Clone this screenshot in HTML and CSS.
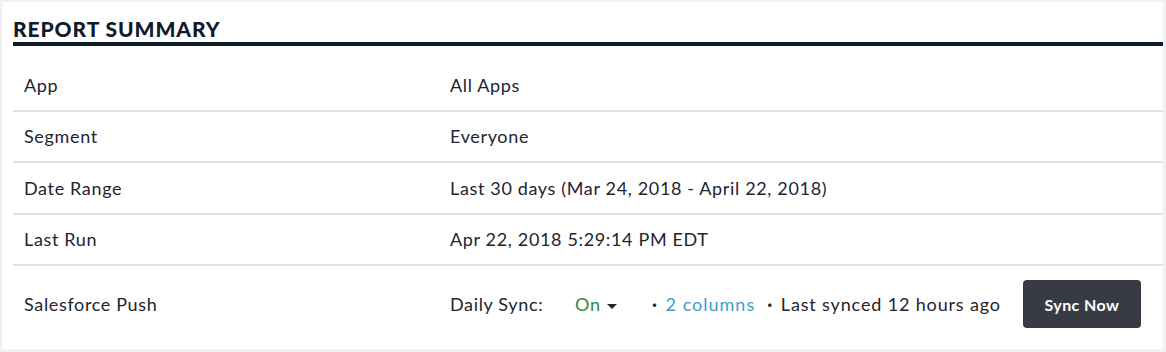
FILE: index.html
```html
<!DOCTYPE html>
<html lang="en">
<head>
  <meta charset="UTF-8" />
  <title>Report Summary</title>
  <link rel="stylesheet" href="styles.css">
</head>
<body>
  <div class="card">
    <h2 class="title">REPORT SUMMARY</h2>

    <div class="rows">
      <div class="row">
        <div class="label">App</div>
        <div class="value">All Apps</div>
      </div>
      <div class="row">
        <div class="label">Segment</div>
        <div class="value">Everyone</div>
      </div>
      <div class="row">
        <div class="label">Date Range</div>
        <div class="value">Last 30 days (Mar 24, 2018 - April 22, 2018)</div>
      </div>
      <div class="row">
        <div class="label">Last Run</div>
        <div class="value">Apr 22, 2018 5:29:14 PM EDT</div>
      </div>
      <div class="row row-last">
        <div class="label">Salesforce Push</div>
        <div class="value sync">
          <span class="sync-label">Daily Sync:</span>
          <span class="sync-state">On <span class="caret"></span></span>
          <span class="dot">&middot;</span>
          <a href="#" class="cols">2 columns</a>
          <span class="dot">&middot;</span>
          <span class="synced">Last synced 12 hours ago</span>
          <button class="btn">Sync Now</button>
        </div>
      </div>
    </div>
  </div>
</body>
</html>
```

FILE: styles.css
```css
body {
  margin: 0;
  background: #f1f1f3;
  font-family: 'Lato', sans-serif;
  color: #1f2430;
}

.card {
  background: white;
  margin: 2px 3px 3px 2px;
  padding: 0 0 0 11px;
  height: 347px;
  box-sizing: border-box;
}

.title {
  margin: 0;
  padding-top: 13px;
  height: 27px;
  font-size: 21px;
  font-weight: 900;
  letter-spacing: 0.9px;
  color: #0f1a2b;
  border-bottom: 4px solid #0f1a2b;
  line-height: 27px;
}

.rows {
  margin-top: 14px;
}

.row {
  display: flex;
  align-items: center;
  height: 49.5px;
  border-bottom: 2px solid #e0e1e7;
  font-size: 18px;
  letter-spacing: 0.65px;
}

.row-last {
  height: 76px;
  padding-bottom: 6px;
  border-bottom: none;
}

.label {
  width: 426px;
  padding-left: 11px;
}

.value {
  flex: 1;
}

.sync {
  display: flex;
  align-items: center;
}

.sync-label {
  width: 125px;
}

.sync-state {
  color: #2a8c3a;
  width: 77px;
}

.caret {
  display: inline-block;
  width: 0;
  height: 0;
  border-left: 5px solid transparent;
  border-right: 5px solid transparent;
  border-top: 5px solid #1f2430;
  vertical-align: middle;
  margin-left: 1px;
}

.dot {
  font-weight: bold;
  margin-right: 8px;
}

.cols {
  color: #3a9fcc;
  text-decoration: none;
  letter-spacing: 1px;
  margin-right: 12px;
}

.synced {
  letter-spacing: 0.85px;
}

.btn {
  background: #393b44;
  color: white;
  border: none;
  border-radius: 4px;
  font-family: inherit;
  font-size: 16px;
  font-weight: bold;
  letter-spacing: 0.4px;
  width: 118px;
  height: 48px;
  margin-left: 22px;
  cursor: pointer;
}
```
